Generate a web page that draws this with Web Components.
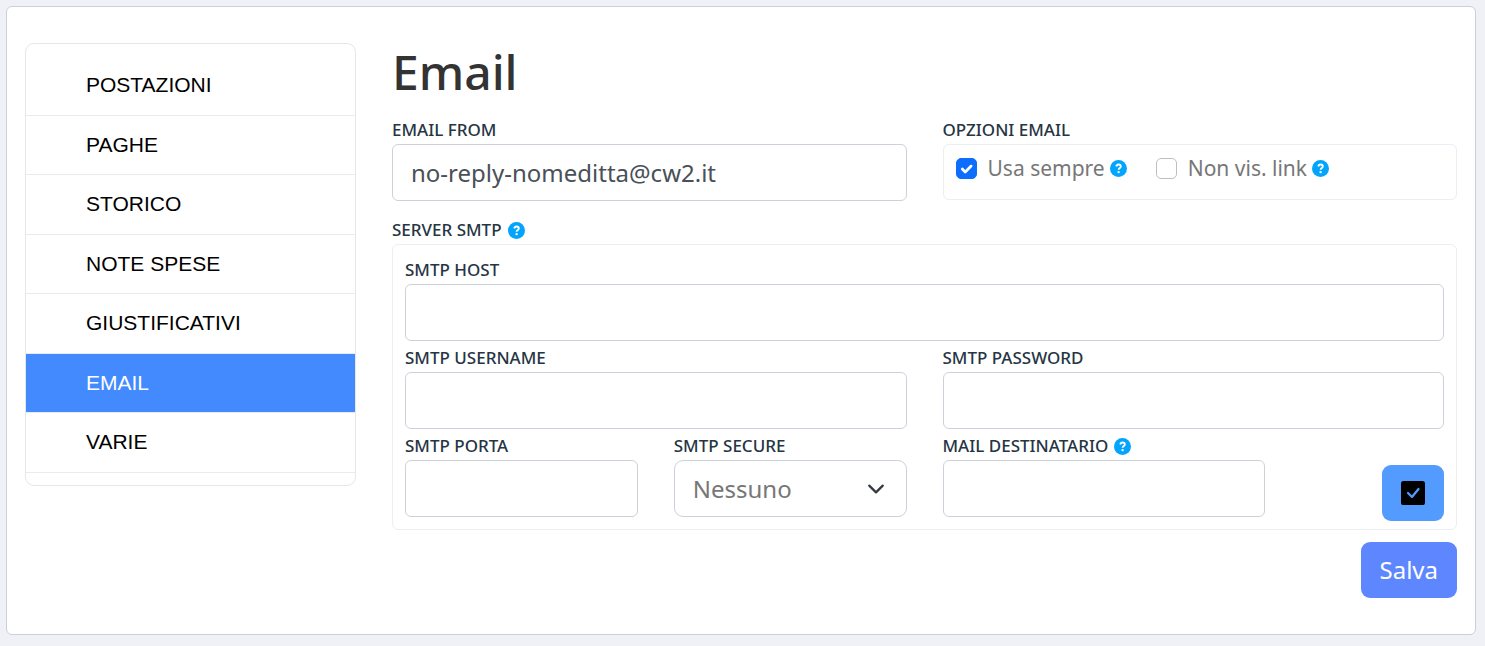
<!DOCTYPE html>
<html lang="it">
<head>
<meta charset="utf-8">
<meta name="viewport" content="width=device-width, initial-scale=1">
<title>Impostazioni - Email</title>
<style>
  body {
    margin: 0;
    padding: 6px 9px 11px 6px;
    background: #f0f1f7;
    font-family: "Noto Sans", sans-serif;
    color: #212b36;
  }
</style>
</head>
<body>
<settings-page>
  <settings-nav slot="nav">
    <nav-item>POSTAZIONI</nav-item>
    <nav-item>PAGHE</nav-item>
    <nav-item>STORICO</nav-item>
    <nav-item>NOTE SPESE</nav-item>
    <nav-item>GIUSTIFICATIVI</nav-item>
    <nav-item active>EMAIL</nav-item>
    <nav-item>VARIE</nav-item>
  </settings-nav>
  <email-form></email-form>
</settings-page>

<script>
const define = (name, html, setup) => {
  const template = document.createElement('template');
  template.innerHTML = html;
  customElements.define(name, class extends HTMLElement {
    constructor() {
      super();
      this.attachShadow({ mode: 'open' }).append(template.content.cloneNode(true));
    }
    connectedCallback() {
      if (setup) setup(this, this.shadowRoot);
    }
  });
};

const base = '*, *::before, *::after { box-sizing: border-box; }';

const labelCss = `
  .head { display: flex; align-items: center; gap: 6px; margin-bottom: 3px; }
  .label { font-size: 17px; line-height: 22px; font-weight: 500; color: #263544; white-space: nowrap; }
`;

const controlCss = `
  input, select {
    display: block; width: 100%; margin: 0; padding: 10px 18px 9px;
    border: 1px solid #cdd1d9; border-radius: 6px; background: #fff;
    font-family: inherit; font-size: 24px; line-height: 1.5; color: #495057; outline: 0;
  }
`;

define('help-tip', `
  <style>
    :host { display: block; flex: none; width: 17px; height: 17px; }
    svg { display: block; }
  </style>
  <svg width="17" height="17" viewBox="0 0 17 17" role="img" aria-label="Aiuto">
    <circle cx="8.5" cy="8.5" r="8.5" fill="#03a5fc"/>
    <path d="M6.3 6.5C6.5 5.2 7.3 4.5 8.6 4.5c1.3 0 2.2.8 2.2 1.9C10.8 8 8.6 8 8.6 9.8" fill="none" stroke="#fff" stroke-width="1.8"/>
    <circle cx="8.6" cy="12.1" r="1.2" fill="#fff"/>
  </svg>`);

define('nav-item', `
  <style>
    ${base}
    :host { display: block; border-bottom: 1px solid #e9ecef; font-family: "Liberation Sans", Arial, sans-serif; }
    a { display: block; padding: 13px 60px 14px; font-size: 21px; line-height: 1.5; color: #000; text-decoration: none; }
    :host([active]) a { background: #448aff; color: #fff; }
  </style>
  <a href="#"><slot></slot></a>`,
  (host, root) => {
    if (host.hasAttribute('active')) root.querySelector('a').setAttribute('aria-current', 'page');
  });

define('settings-nav', `
  <style>
    :host { display: block; padding: 12px 0; border: 1px solid #e2e8ee; border-radius: 9px; background: #fff; }
    nav { display: block; }
  </style>
  <nav><slot></slot></nav>`);

define('settings-page', `
  <style>
    ${base}
    :host { display: block; }
    .card {
      display: grid; grid-template-columns: repeat(4, minmax(0, 1fr)); column-gap: 36px; align-items: start;
      padding: 36px 18px; border: 1px solid #c9cfdd; border-radius: 6px; background: #fff;
    }
    main { grid-column: span 3; }
  </style>
  <div class="card"><slot name="nav"></slot><main><slot></slot></main></div>`);

define('text-field', `
  <style>
    ${base} ${labelCss} ${controlCss}
    :host { display: block; min-width: 0; }
  </style>
  <div class="head"><label class="label" for="control"></label></div>
  <input id="control">`,
  (host, root) => {
    root.querySelector('label').textContent = host.getAttribute('label');
    const input = root.querySelector('input');
    input.type = host.getAttribute('type') || 'text';
    input.value = host.getAttribute('value') || '';
    if (host.hasAttribute('help')) root.querySelector('.head').append(document.createElement('help-tip'));
  });

define('select-field', `
  <style>
    ${base} ${labelCss} ${controlCss}
    :host { display: block; min-width: 0; }
    .box { display: grid; align-items: center; }
    .box > * { grid-area: 1 / 1; }
    select { appearance: none; border-radius: 9px; color: #777; }
    svg { justify-self: end; margin-right: 22px; pointer-events: none; }
  </style>
  <div class="head"><label class="label" for="control"></label></div>
  <div class="box">
    <select id="control"><option>Nessuno</option><option>SSL</option><option>TLS</option></select>
    <svg width="18" height="18" viewBox="0 0 16 16" fill="none" stroke="#343a40" stroke-width="2" stroke-linecap="round" stroke-linejoin="round" aria-hidden="true"><path d="m2 5 6 6 6-6"/></svg>
  </div>`,
  (host, root) => { root.querySelector('label').textContent = host.getAttribute('label'); });

define('check-option', `
  <style>
    ${base}
    :host { display: flex; align-items: center; gap: 5px; }
    label { display: flex; align-items: center; gap: 11px; font-size: 21px; line-height: 24px; color: #777; white-space: nowrap; }
    .box { display: grid; }
    .box > * { grid-area: 1 / 1; }
    input { appearance: none; width: 21px; height: 21px; margin: 0; border: 1px solid #bfbfbf; border-radius: 5px; background: #fff; }
    input:checked { border-color: #0d6efd; background: #0d6efd; }
    svg { pointer-events: none; visibility: hidden; }
    input:checked + svg { visibility: visible; }
  </style>
  <label>
    <span class="box">
      <input type="checkbox">
      <svg width="21" height="21" viewBox="0 0 20 20" fill="none" stroke="#fff" stroke-width="2.6" stroke-linecap="round" stroke-linejoin="round" aria-hidden="true"><path d="m6 10.5 2.8 2.8 5.6-5.6"/></svg>
    </span>
    <slot></slot>
  </label>
  <help-tip></help-tip>`,
  (host, root) => { root.querySelector('input').checked = host.hasAttribute('checked'); });

define('field-panel', `
  <style>
    ${base} ${labelCss}
    :host { display: block; min-width: 0; }
    .panel { border: 1px solid #e9eff5; border-radius: 6px; }
  </style>
  <section aria-labelledby="title">
    <div class="head"><span class="label" id="title"></span></div>
    <div class="panel"><slot></slot></div>
  </section>`,
  (host, root) => {
    root.querySelector('#title').textContent = host.getAttribute('label');
    if (host.hasAttribute('help')) root.querySelector('.head').append(document.createElement('help-tip'));
  });

define('action-button', `
  <style>
    ${base}
    :host { display: inline-block; }
    button {
      display: flex; align-items: center; justify-content: center; height: 56px; padding: 0 19px;
      border: 0; border-radius: 9px; background: #5e87ff; color: #fff;
      font-family: inherit; font-size: 24px; line-height: 36px;
    }
    :host([variant="check"]) button { background: #539bff; color: #000; }
  </style>
  <button type="button"><slot></slot></button>`,
  (host, root) => {
    if (host.title) root.querySelector('button').setAttribute('aria-label', host.title);
  });

define('email-form', `
  <style>
    ${base}
    :host { display: block; }
    h1 { margin: 0 0 18px; font-size: 48px; line-height: 58px; font-weight: 500; color: #333; }
    .top { display: grid; grid-template-columns: repeat(2, minmax(0, 1fr)); column-gap: 36px; margin-bottom: 18px; }
    .options { display: flex; gap: 29px; padding: 11px 12px 19px; }
    .smtp { display: grid; grid-template-columns: repeat(12, minmax(0, 1fr)); gap: 6px 36px; align-items: start; padding: 14px 12px 8px; }
    .full { grid-column: span 12; }
    .half { grid-column: span 6; }
    .quarter { grid-column: span 3; }
    .third { grid-column: span 4; }
    .test { grid-column: span 2; justify-self: end; margin-top: 30px; }
    .test svg { display: block; }
    .actions { display: flex; justify-content: flex-end; margin-top: 12px; }
  </style>
  <form>
    <h1>Email</h1>
    <div class="top">
      <text-field label="EMAIL FROM" type="email" value="no-reply-nomeditta@cw2.it"></text-field>
      <field-panel label="OPZIONI EMAIL">
        <div class="options">
          <check-option checked>Usa sempre</check-option>
          <check-option>Non vis. link</check-option>
        </div>
      </field-panel>
    </div>
    <field-panel label="SERVER SMTP" help>
      <div class="smtp">
        <text-field class="full" label="SMTP HOST"></text-field>
        <text-field class="half" label="SMTP USERNAME"></text-field>
        <text-field class="half" label="SMTP PASSWORD" type="password"></text-field>
        <text-field class="quarter" label="SMTP PORTA"></text-field>
        <select-field class="quarter" label="SMTP SECURE"></select-field>
        <text-field class="third" label="MAIL DESTINATARIO" type="email" help></text-field>
        <action-button class="test" variant="check" title="Prova">
          <svg width="24" height="24" viewBox="0 0 24 24" aria-hidden="true"><rect width="24" height="24" rx="2.6"/><path d="m7 12 4 4 6.5-8" fill="none" stroke="#539bff" stroke-width="2.2" stroke-linecap="round" stroke-linejoin="round"/></svg>
        </action-button>
      </div>
    </field-panel>
    <div class="actions"><action-button>Salva</action-button></div>
  </form>`);
</script>
</body>
</html>
